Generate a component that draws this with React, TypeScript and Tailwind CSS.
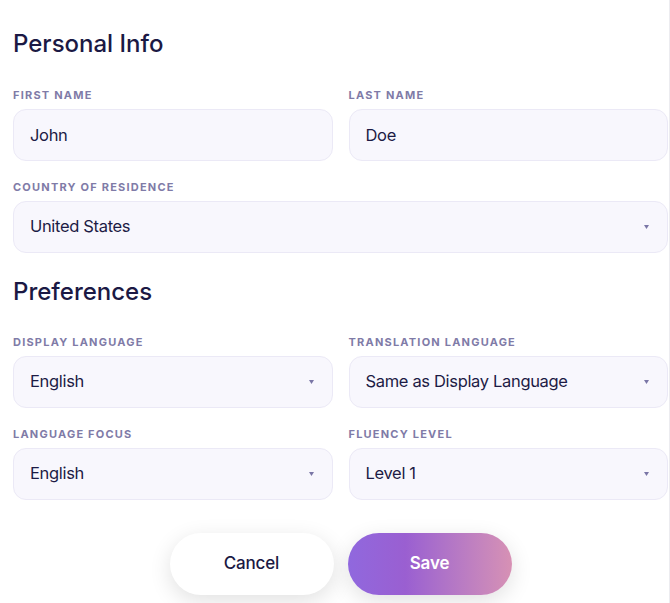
import React, { useState } from 'react';

type Option = { label: string; value: string };

const countries: Option[] = [
  { label: 'United States', value: 'us' },
  { label: 'Canada', value: 'ca' },
  { label: 'United Kingdom', value: 'uk' },
];

const languages: Option[] = [
  { label: 'English', value: 'en' },
  { label: 'Spanish', value: 'es' },
  { label: 'French', value: 'fr' },
];

const translationLanguages: Option[] = [{ label: 'Same as Display Language', value: 'same' }, ...languages];

const levels: Option[] = [1, 2, 3, 4, 5].map((n) => ({ label: `Level ${n}`, value: String(n) }));

const fieldBox =
  'w-full h-[52px] rounded-[13px] border border-[#ebe9f6] bg-[#f8f7fd] pl-[16px] pr-[19px] pb-[1px] text-[16.5px] tracking-[-0.02em] text-[#1d1b45] outline-none';

const Label: React.FC<{ children: React.ReactNode }> = ({ children }) => (
  <label className="block text-[11px] leading-4 font-bold tracking-[0.11em] uppercase text-[#7f7ba7] mb-[6px]">
    {children}
  </label>
);

const TextField: React.FC<{ label: string; value: string; onChange: (v: string) => void }> = ({ label, value, onChange }) => (
  <div>
    <Label>{label}</Label>
    <input className={fieldBox} value={value} onChange={(e) => onChange(e.target.value)} />
  </div>
);

const SelectField: React.FC<{ label: string; value: string; options: Option[]; onChange: (v: string) => void }> = ({
  label,
  value,
  options,
  onChange,
}) => (
  <div>
    <Label>{label}</Label>
    <div className="relative">
      <select className={`${fieldBox} appearance-none`} value={value} onChange={(e) => onChange(e.target.value)}>
        {options.map((o) => (
          <option key={o.value} value={o.value}>
            {o.label}
          </option>
        ))}
      </select>
      {/* small caret */}
      <svg className="pointer-events-none absolute right-[19px] top-1/2 -translate-y-1/2" width="5" height="4" viewBox="0 0 5 4">
        <path d="M0 0h5L2.5 4z" fill="#7a76a6" />
      </svg>
    </div>
  </div>
);

export default function App() {
  const [firstName, setFirstName] = useState('John');
  const [lastName, setLastName] = useState('Doe');
  const [country, setCountry] = useState('us');
  const [displayLang, setDisplayLang] = useState('en');
  const [translationLang, setTranslationLang] = useState('same');
  const [focusLang, setFocusLang] = useState('en');
  const [level, setLevel] = useState('1');

  return (
    <div className="min-h-[603px] w-[670px] bg-white border-r border-[#ececf0] font-['Inter','Noto_Sans',sans-serif]">
      <div className="pl-[13px] pr-[1px] pt-[28px]">
        <h2 className="text-[24px] leading-8 font-medium text-[#1b1944] mb-[27px]">Personal Info</h2>

        <div className="grid grid-cols-2 gap-x-[16px]">
          <TextField label="First Name" value={firstName} onChange={setFirstName} />
          <TextField label="Last Name" value={lastName} onChange={setLastName} />
        </div>

        <div className="mt-[18px]">
          <SelectField label="Country of Residence" value={country} options={countries} onChange={setCountry} />
        </div>

        <h2 className="text-[24px] leading-8 font-medium text-[#1b1944] mt-[23px] mb-[26px]">Preferences</h2>

        <div className="grid grid-cols-2 gap-x-[16px] gap-y-[18px]">
          <SelectField label="Display Language" value={displayLang} options={languages} onChange={setDisplayLang} />
          <SelectField
            label="Translation Language"
            value={translationLang}
            options={translationLanguages}
            onChange={setTranslationLang}
          />
          <SelectField label="Language Focus" value={focusLang} options={languages} onChange={setFocusLang} />
          <SelectField label="Fluency Level" value={level} options={levels} onChange={setLevel} />
        </div>

        <div className="flex justify-center gap-[14px] mt-[33px]">
          <button className="w-[164px] h-[62px] rounded-full bg-white text-[17px] font-medium tracking-[-0.01em] text-[#1b1944] shadow-[0_6px_22px_rgba(0,0,0,0.12)]">
            Cancel
          </button>
          <button className="w-[164px] h-[62px] rounded-full bg-gradient-to-r from-[#9068de] via-[#9a5fd1] via-35% to-[#d791b4] text-[17px] font-semibold tracking-[-0.01em] text-white shadow-[0_6px_22px_rgba(0,0,0,0.12)]">
            Save
          </button>
        </div>
      </div>
    </div>
  );
}
